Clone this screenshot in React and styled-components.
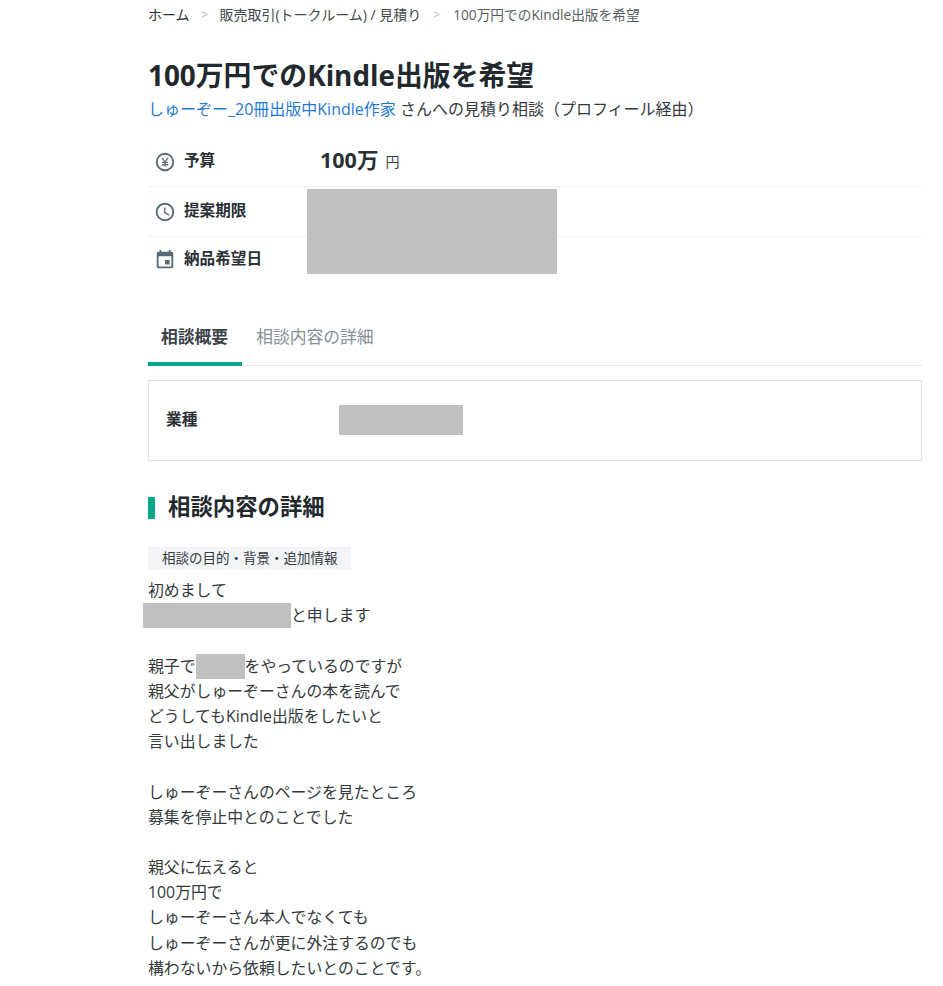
import React from "react";
import styled, { createGlobalStyle } from "styled-components";

const Global = createGlobalStyle`
  html, body { margin: 0; padding: 0; background: #fff; }
  body { font-family: "Open Sans", "Noto Sans CJK JP", sans-serif; color: #2a2f33; }
`;

const Page = styled.div`
  box-sizing: border-box;
  width: 943px;
  height: 986px;
  overflow: hidden;
  padding: 0 21px 0 148px;
`;

const Breadcrumb = styled.nav`
  display: flex;
  align-items: center;
  height: 28px;
  font-size: 14px;
  color: #555e64;
`;
const Crumb = styled.span`
  color: ${(p) => p.$color || "#40494e"};
  font-size: ${(p) => p.$size || "14px"};
  white-space: nowrap;
`;
const Sep = styled.span`
  color: #b5bcc0;
  margin: 0 ${(p) => p.$after || 11}px 0 12px;
  font-size: 12px;
`;

const Title = styled.h1`
  margin: 29px 0 0;
  font-size: 27.85px;
  line-height: 36px;
  font-weight: 700;
  color: #22292e;
  white-space: nowrap;
`;
const Sub = styled.p`
  margin: 3px 0 0;
  font-size: 16px;
  line-height: 26px;
  color: #33393d;
  white-space: nowrap;
`;
const UserLink = styled.a`
  color: #1f7bd1;
`;

const Meta = styled.div`
  position: relative;
  margin-top: 15px;
`;
const MetaRow = styled.div`
  display: flex;
  align-items: center;
  height: ${(p) => (p.$last ? "45px" : "50px")};
  box-sizing: border-box;
  border-bottom: ${(p) => (p.$last ? "none" : "1px solid #f0f1f2")};
  padding: 0 0 3px 6px;
`;
const MetaIcon = styled.svg`
  width: 22px;
  height: 22px;
  flex: none;
  margin-top: 3px;
  color: #566a75;
  fill: currentColor;
`;
const MetaLabel = styled.span`
  width: 136px;
  margin: 0 0 2px 8px;
  font-size: 15.6px;
  font-weight: 700;
  color: #2a3035;
  white-space: nowrap;
`;
const Amount = styled.span`
  margin-bottom: 4px;
  font-size: 21.5px;
  font-weight: 700;
  color: #2a3035;
`;
const Unit = styled.span`
  margin-left: 7px;
  margin-top: 1px;
  font-size: 14px;
  color: #3c4347;
`;
const MetaMask = styled.div`
  position: absolute;
  left: 159px;
  top: 52px;
  width: 250px;
  height: 85px;
  background: #c0c0c0;
`;

const Tabs = styled.div`
  display: flex;
  gap: 14px;
  margin-top: 44px;
  height: 40px;
  box-sizing: border-box;
  border-bottom: 1px solid #e6e8e9;
`;
const Tab = styled.div`
  box-sizing: border-box;
  height: 40px;
  padding: 0 ${(p) => (p.$active ? "14px 0 13px" : "0")};
  line-height: 22px;
  font-size: 16.8px;
  white-space: nowrap;
  font-weight: ${(p) => (p.$active ? 700 : 400)};
  color: ${(p) => (p.$active ? "#3b4449" : "#84909a")};
  border-bottom: ${(p) => (p.$active ? "4px solid #07a58c" : "none")};
`;

const Card = styled.div`
  box-sizing: border-box;
  display: flex;
  margin-top: 14px;
  height: 81px;
  padding: 24px 18px 24px 17px;
  border: 1px solid #dfe1e2;
`;
const CardLabel = styled.div`
  width: 173px;
  font-size: 15.7px;
  line-height: 28px;
  font-weight: 700;
  color: #2a3035;
`;
const CardMask = styled.div`
  width: 124px;
  height: 30px;
  background: #c0c0c0;
`;

const Heading = styled.h2`
  margin: 36px 0 0;
  padding-left: 13px;
  border-left: 7px solid #07a58c;
  height: 22px;
  line-height: 20px;
  font-size: 22.4px;
  font-weight: 700;
  color: #22292e;
  white-space: nowrap;
`;
const Tag = styled.div`
  display: block;
  width: fit-content;
  margin-top: 28px;
  padding: 0 13px 0 14px;
  height: 23px;
  line-height: 23px;
  font-size: 13.5px;
  color: #33393d;
  background: #f2f4f7;
  white-space: nowrap;
`;
const Body = styled.div`
  font-size: 15.85px;
  line-height: 25.2px;
  color: #33393d;
  margin-top: 8px;
`;
const Line = styled.div`
  height: 25.2px;
  white-space: nowrap;
`;
const Mask = styled.span`
  display: inline-block;
  vertical-align: top;
  height: 25px;
  width: ${(p) => p.$w}px;
  margin-left: ${(p) => p.$ml || 0}px;
  background: #c0c0c0;
`;

const lines = [
  "初めまして",
  <><Mask $w={148} $ml={-5} />と申します</>,
  "",
  <>親子で<Mask $w={49} />をやっているのですが</>,
  "親父がしゅーぞーさんの本を読んで",
  "どうしてもKindle出版をしたいと",
  "言い出しました",
  "",
  "しゅーぞーさんのページを見たところ",
  "募集を停止中とのことでした",
  "",
  "親父に伝えると",
  "100万円で",
  "しゅーぞーさん本人でなくても",
  "しゅーぞーさんが更に外注するのでも",
  "構わないから依頼したいとのことです。",
];

export default function App() {
  return (
    <Page>
      <Global />
      <Breadcrumb>
        <Crumb $color="#2a3035">ホーム</Crumb>
        <Sep>&gt;</Sep>
        <Crumb>販売取引(トークルーム) / 見積り</Crumb>
        <Sep $after={13}>&gt;</Sep>
        <Crumb $color="#555e64" $size="13.7px">100万円でのKindle出版を希望</Crumb>
      </Breadcrumb>
      <Title>100万円でのKindle出版を希望</Title>
      <Sub>
        <UserLink>しゅーぞー_20冊出版中Kindle作家</UserLink> さんへの見積り相談（プロフィール経由）
      </Sub>
      <Meta>
        <MetaRow>
          <MetaIcon viewBox="0 0 24 24">
            <circle cx="12" cy="12" r="9" fill="none" stroke="currentColor" strokeWidth="2" />
            <path d="M8.8 7.5 12 12l3.2-4.5M8.5 12.5h7M8.5 15h7M12 12v5" fill="none" stroke="currentColor" strokeWidth="1.4" />
          </MetaIcon>
          <MetaLabel>予算</MetaLabel>
          <Amount>100万</Amount>
          <Unit>円</Unit>
        </MetaRow>
        <MetaRow>
          <MetaIcon viewBox="0 0 24 24">
            <path d="M11.99 2C6.47 2 2 6.48 2 12s4.47 10 9.99 10C17.52 22 22 17.52 22 12S17.52 2 11.99 2zM12 20c-4.42 0-8-3.58-8-8s3.58-8 8-8 8 3.58 8 8-3.58 8-8 8zm.5-13H11v6l5.25 3.15.75-1.23-4.5-2.67z" />
          </MetaIcon>
          <MetaLabel>提案期限</MetaLabel>
        </MetaRow>
        <MetaRow $last>
          <MetaIcon viewBox="0 0 24 24">
            <path d="M17 12h-5v5h5v-5zM16 1v2H8V1H6v2H5c-1.11 0-1.99.9-1.99 2L3 19c0 1.1.89 2 2 2h14c1.1 0 2-.9 2-2V5c0-1.1-.9-2-2-2h-1V1h-2zm3 18H5V8h14v11z" />
          </MetaIcon>
          <MetaLabel>納品希望日</MetaLabel>
        </MetaRow>
        <MetaMask />
      </Meta>
      <Tabs>
        <Tab $active>相談概要</Tab>
        <Tab>相談内容の詳細</Tab>
      </Tabs>
      <Card>
        <CardLabel>業種</CardLabel>
        <CardMask />
      </Card>
      <Heading>相談内容の詳細</Heading>
      <Tag>相談の目的・背景・追加情報</Tag>
      <Body>
        {lines.map((l, i) => (
          <Line key={i}>{l}</Line>
        ))}
      </Body>
    </Page>
  );
}
